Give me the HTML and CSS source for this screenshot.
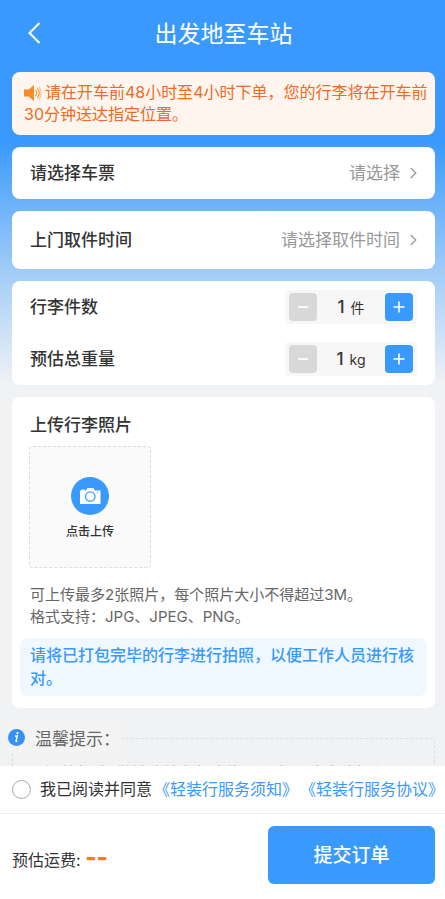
FILE: index.html
```html
<!DOCTYPE html>
<html lang="zh-CN">
<head>
<meta charset="utf-8">
<meta name="viewport" content="width=device-width, initial-scale=1">
<title>出发地至车站</title>
<link rel="stylesheet" href="styles.css">
</head>
<body>
<form class="page">
  <main class="content">
    <header class="header">
      <button class="back" type="button" aria-label="返回">
        <svg width="14" height="22" viewBox="0 0 14 22" fill="none" stroke="currentColor" stroke-width="2"><path d="M12.500 1 2.500 11l10 10"/></svg>
      </button>
      <h1 class="title">出发地至车站</h1>
    </header>

    <p class="notice"><svg class="horn" width="21" height="18" viewBox="0 0 21 18" fill="none"><path d="M0 5.500h4.500L10 1v16L4.500 12.500H0z" fill="#f98b24"/><path d="M11.500 6q2.500 3 0 6M13.300 4q4 5 0 10" stroke="#fba24c" stroke-width="1.300"/><path d="M15 2.500q4.500 6.500 0 13" stroke="#fdc48d" stroke-width="1.200"/></svg>请在开车前48小时至4小时下单，您的行李将在开车前30分钟送达指定位置。</p>

    <section class="card">
      <button class="pick" type="button">
        <span class="label">请选择车票</span>
        <span class="value">请选择</span>
        <svg class="chevron" width="7" height="12" viewBox="0 0 7 12" fill="none" stroke="currentColor" stroke-width="1.300"><path d="m.8 1 5 5-5 5"/></svg>
      </button>
    </section>

    <section class="card">
      <button class="pick pick-tall" type="button">
        <span class="label">上门取件时间</span>
        <span class="value">请选择取件时间</span>
        <svg class="chevron" width="7" height="12" viewBox="0 0 7 12" fill="none" stroke="currentColor" stroke-width="1.300"><path d="m.8 1 5 5-5 5"/></svg>
      </button>
    </section>

    <section class="card">
      <div class="row">
        <span class="label">行李件数</span>
        <div class="stepper">
          <button class="step" type="button" disabled aria-label="减少件数"><svg width="12" height="12" viewBox="0 0 12 12" stroke="currentColor" stroke-width="1.600"><path d="M1 6h10"/></svg></button>
          <output class="amount"><b>1</b><span>件</span></output>
          <button class="step" type="button" aria-label="增加件数"><svg width="12" height="12" viewBox="0 0 12 12" stroke="currentColor" stroke-width="1.600"><path d="M.5 6h11M6 .5v11"/></svg></button>
        </div>
      </div>
      <div class="row">
        <span class="label">预估总重量</span>
        <div class="stepper">
          <button class="step" type="button" disabled aria-label="减少重量"><svg width="12" height="12" viewBox="0 0 12 12" stroke="currentColor" stroke-width="1.600"><path d="M1 6h10"/></svg></button>
          <output class="amount"><b>1</b><span>kg</span></output>
          <button class="step" type="button" aria-label="增加重量"><svg width="12" height="12" viewBox="0 0 12 12" stroke="currentColor" stroke-width="1.600"><path d="M.5 6h11M6 .5v11"/></svg></button>
        </div>
      </div>
    </section>

    <section class="card photos">
      <h2 class="label">上传行李照片</h2>
      <button class="upload" type="button">
        <svg width="38" height="38" viewBox="0 0 38 38" fill="none"><circle cx="19" cy="19" r="19" fill="#3999fc"/><path d="M9 13.500h1.500v-1h3v1H15l1.500-2.500h6l1.500 2.500h5.500v13.500H9z" fill="#fff"/><circle cx="19.300" cy="19.500" r="4.700" stroke="#3999fc" stroke-width="1.300"/><circle cx="26.500" cy="15.500" r=".6" fill="#3999fc"/></svg>
        <span>点击上传</span>
      </button>
      <p class="hint">可上传最多2张照片，每个照片大小不得超过3M。<br>格式支持：JPG、JPEG、PNG。</p>
      <p class="remind">请将已打包完毕的行李进行拍照，以便工作人员进行核对。</p>
    </section>

    <section class="tips">
      <h2 class="tips-title">
        <svg width="17" height="17" viewBox="0 0 17 17"><circle cx="8.500" cy="8.500" r="8.500" fill="#3590f7"/><path d="M7 7.300 9.300 6.800 8 12.100q0 .8 1.300-.3" stroke="#fff" stroke-width="1.400" fill="none"/><circle cx="9.500" cy="4.200" r="1.100" fill="#fff"/></svg>
        <span>温馨提示：</span>
      </h2>
      <p class="tips-text">“轻装行”提供铁路站车行李搬运服务，请确认行程</p>
    </section>
  </main>

  <footer class="footer">
    <div class="agree">
      <input class="radio" type="checkbox" id="agree">
      <label for="agree">我已阅读并同意</label>
      <a href="#notice">《轻装行服务须知》</a>
      <a href="#terms">《轻装行服务协议》</a>
    </div>
    <div class="pay">
      <p class="fee">预估运费: <strong>--</strong></p>
      <button class="submit" type="submit">提交订单</button>
    </div>
  </footer>
</form>
</body>
</html>
```
FILE: styles.css
```css
* {
  box-sizing: border-box;
}

body,
h1,
h2,
p {
  margin: 0;
}

body {
  font-family: Inter, "Noto Sans CJK SC", sans-serif;
  font-size: 16px;
  color: #333;
}

button {
  padding: 0;
  border: 0;
  background: none;
  font: inherit;
  color: inherit;
}

svg {
  flex: none;
}

a {
  color: #3999fc;
  text-decoration: none;
}

.page {
  display: flex;
  flex-direction: column;
  height: 100vh;
}

.content {
  flex: 1;
  min-height: 0;
  padding: 0 10px 0 12px;
  overflow: hidden auto;
  scrollbar-width: none;
  background: #f2f2f3 linear-gradient(#3999fc 140px, #a4cdf8 275px, #f1f2f4 385px) no-repeat;
}

.header {
  display: grid;
  grid-template-columns: 44px 1fr 44px;
  align-items: center;
  height: 72px;
  padding-bottom: 8px;
  color: #fff;
}

.back {
  display: flex;
  justify-content: center;
  padding-top: 2px;
}

.title {
  font-size: 23px;
  font-weight: 400;
  text-align: center;
}

.notice {
  padding: 9px 4px 10px 12px;
  border-radius: 8px;
  background: #fff5ef;
  line-height: 22px;
  color: #ee6a25;
}

.horn {
  vertical-align: -4px;
}

.card {
  margin-top: 12px;
  border-radius: 8px;
  background: #fff;
}

.pick,
.row {
  display: flex;
  align-items: center;
  width: 100%;
  height: 52px;
  padding: 0 18px;
}

.pick-tall {
  height: 58px;
}

.label {
  margin-right: auto;
  font-size: 17px;
  font-weight: 500;
  line-height: 24px;
}

.value {
  font-size: 17px;
  line-height: 24px;
  color: #999;
}

.chevron {
  margin-left: 10px;
  color: #999;
}

.stepper {
  display: flex;
  justify-content: space-between;
  align-items: center;
  width: 132px;
  padding: 3px 4px;
  border-radius: 4px;
  background: #f7f7f7;
}

.step {
  display: flex;
  justify-content: center;
  align-items: center;
  width: 28px;
  height: 28px;
  border-radius: 4px;
  background: #3999fc;
  color: #fff;
}

.step:disabled {
  background: #d8d8d8;
}

.amount {
  display: flex;
  align-items: baseline;
  gap: 6px;
  font-size: 14px;
}

.amount b {
  font-size: 17px;
  font-weight: 500;
}

.photos {
  padding: 16px 8px 12px;
}

.photos .label,
.hint {
  margin-left: 10px;
}

.upload {
  display: flex;
  flex-direction: column;
  align-items: center;
  gap: 7px;
  width: 122px;
  height: 122px;
  margin: 9px 0 16px 9px;
  padding-top: 30px;
  border: 1px dashed #ddd;
  border-radius: 4px;
  background: #fafafa;
  font-size: 12px;
  font-weight: 500;
}

.hint {
  font-size: 15px;
  line-height: 22px;
  color: #666;
}

.remind {
  margin-top: 10px;
  padding: 6px 10px;
  border-radius: 8px;
  background: #eff8ff;
  font-weight: 500;
  line-height: 23px;
  color: #3999fc;
}

.tips {
  margin-top: 30px;
  border: 1px dashed #ddd;
  border-radius: 4px;
  color: #666;
}

.tips-title {
  display: flex;
  align-items: center;
  gap: 10px;
  width: 114px;
  height: 34px;
  margin: -19px 0 0 -5px;
  background: #f3f3f3;
  font-size: 17px;
  font-weight: 400;
  white-space: nowrap;
}

.tips-text {
  padding: 7px 24px;
  line-height: 24px;
  color: #aaa;
}

.footer {
  background: #fff;
}

.agree {
  display: flex;
  align-items: center;
  gap: 2px;
  height: 48px;
  padding: 0 0 2px 12px;
  border-bottom: 1px solid #eee;
  line-height: 20px;
  white-space: nowrap;
}

.radio {
  flex: none;
  width: 19px;
  height: 19px;
  margin: 2px 7px 0 0;
  appearance: none;
  border: 1px solid #aaa;
  border-radius: 50%;
}

.radio:checked {
  background: #3999fc;
}

.pay {
  display: flex;
  justify-content: space-between;
  align-items: center;
  padding: 12px 10px 15px 12px;
}

.fee {
  padding-top: 4px;
}

.fee strong {
  font-size: 24px;
  font-weight: 800;
  color: #f47a2c;
}

.submit {
  width: 167px;
  height: 58px;
  padding-bottom: 3px;
  border-radius: 6px;
  background: #3999fc;
  font-size: 19px;
  font-weight: 500;
  color: #fff;
}
```
